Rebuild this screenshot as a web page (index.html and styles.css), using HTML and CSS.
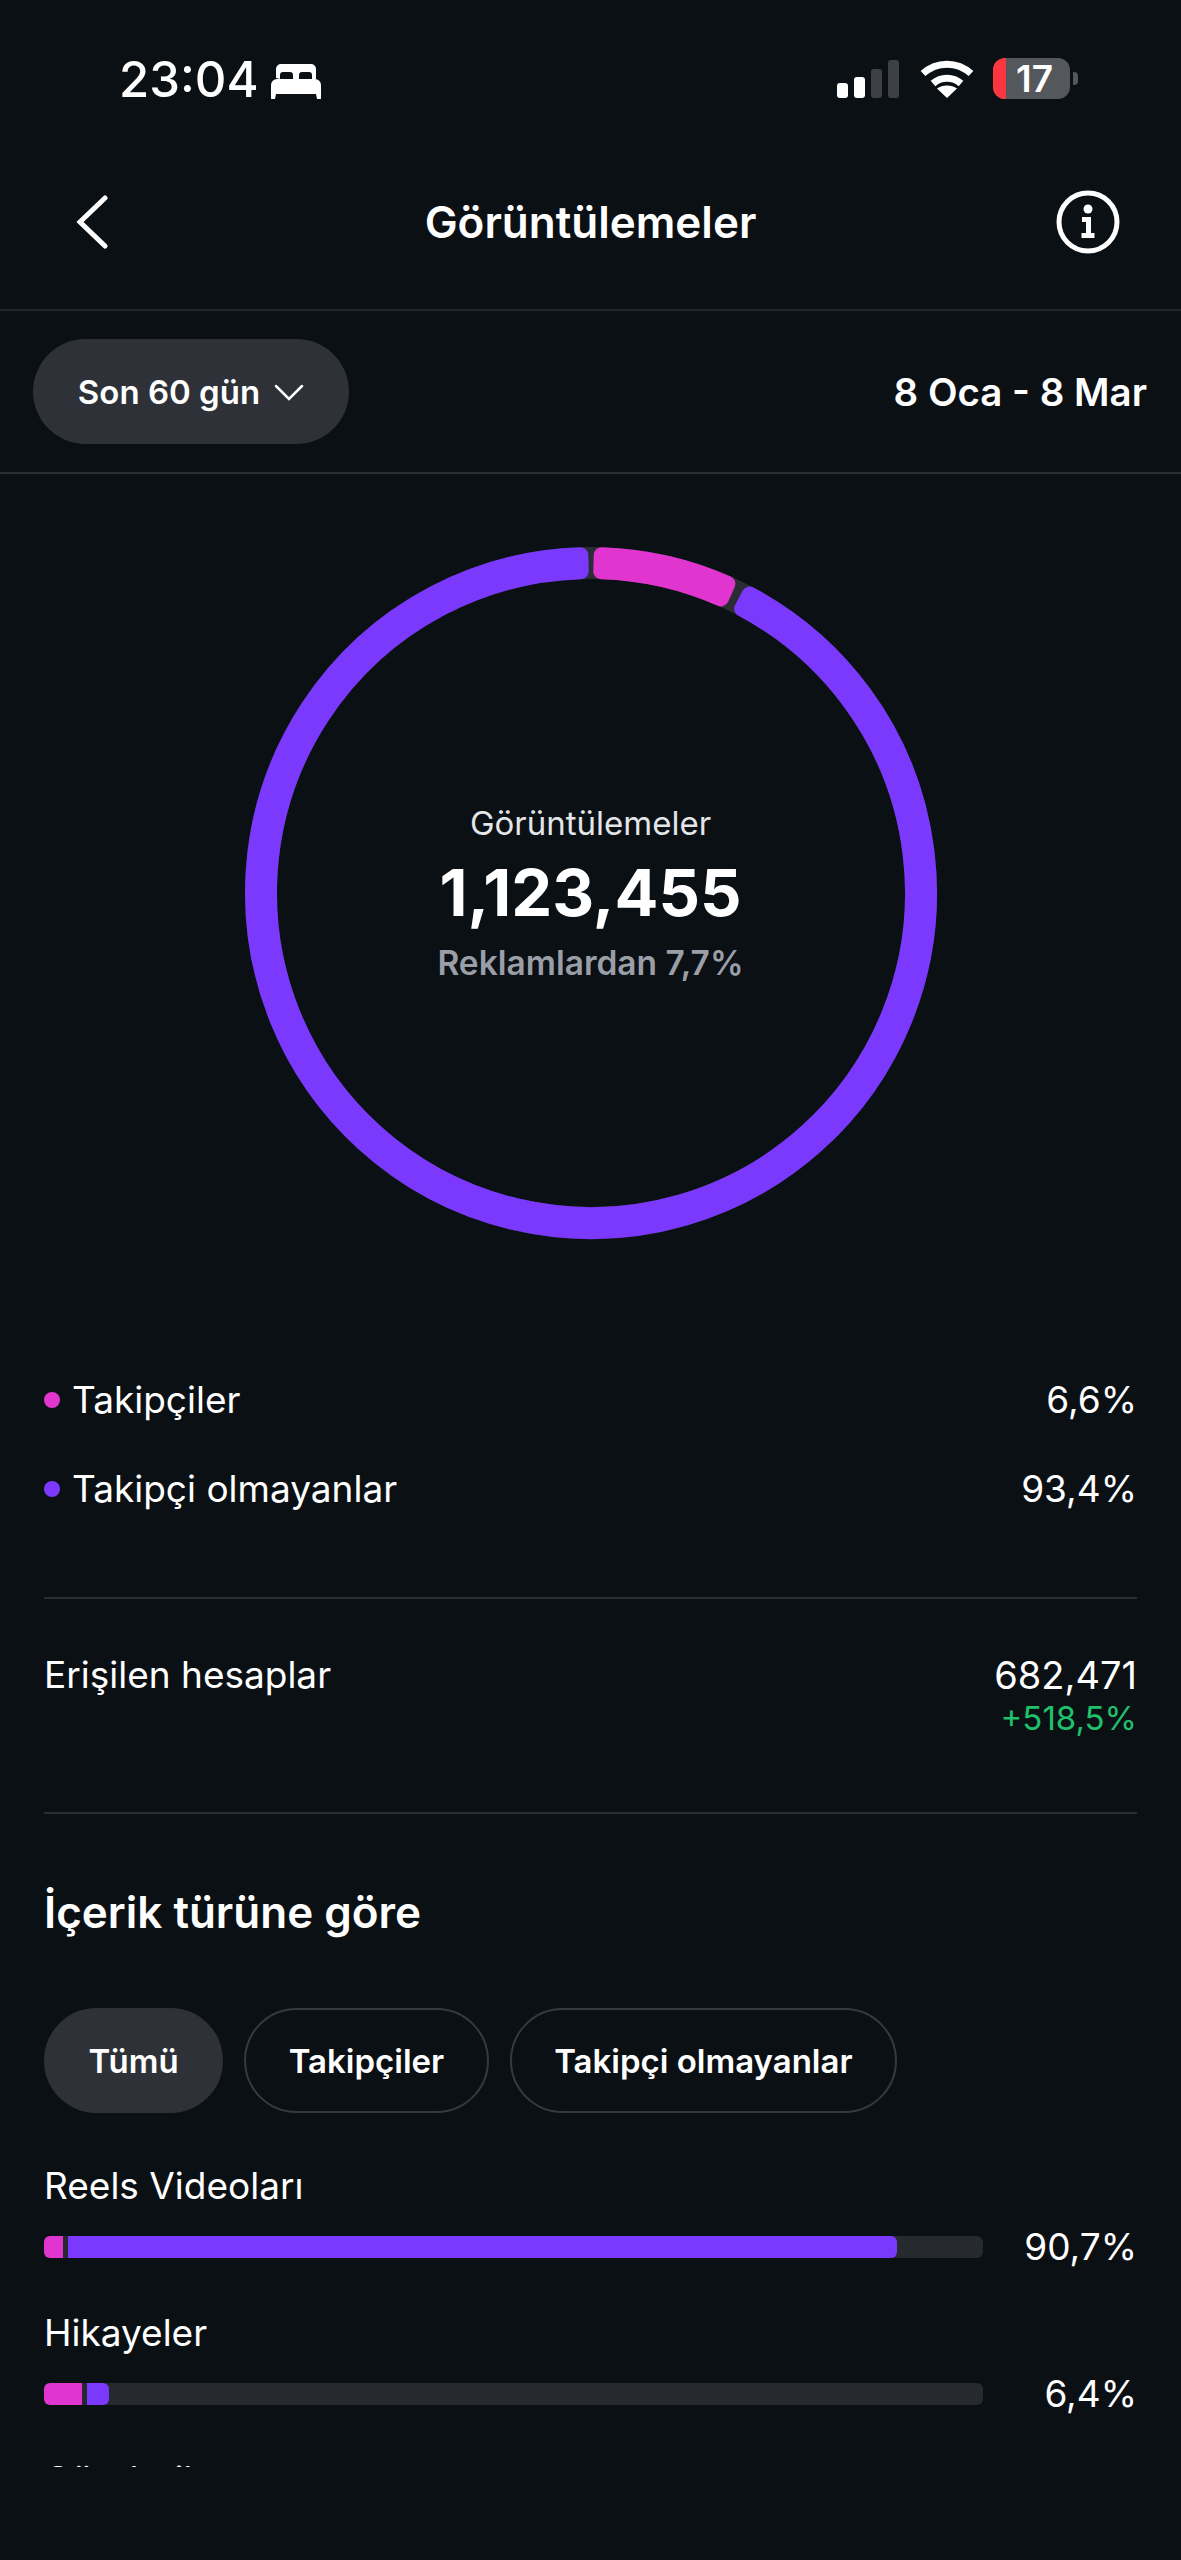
FILE: index.html
```html
<!DOCTYPE html>
<html lang="tr">

<head>
    <meta charset="utf-8">
    <meta name="viewport" content="width=device-width, initial-scale=1">
    <title>Görüntülemeler</title>
    <link rel="stylesheet" href="styles.css">
</head>

<body>
    <!-- Status bar -->
    <div class="status-bar">
        <div class="status-left">
            <span class="clock">23:04</span>
            <svg class="bed" width="50" height="36" viewBox="0 0 50 36">
                <path fill="#fff" d="M5 15V6a5 5 0 0 1 5-5h30a5 5 0 0 1 5 5v10h-4v-4a3 3 0 0 0-3-3h-7a3 3 0 0 0-3 3v4h-6v-4a3 3 0 0 0-3-3h-7a3 3 0 0 0-3 3v4zM0 22a6 6 0 0 1 6-6h38a6 6 0 0 1 6 6v14h-4l-1-5H5l-1 5H0z" />
            </svg>
        </div>
        <div class="status-right">
            <div class="signal">
                <span class="sig-bar sig-1"></span>
                <span class="sig-bar sig-2"></span>
                <span class="sig-bar sig-3 off"></span>
                <span class="sig-bar sig-4 off"></span>
            </div>
            <svg class="wifi" width="54" height="38" viewBox="0 0 54 38">
                <path fill="none" stroke="#fff" stroke-width="7" d="M3 13.5C17 1 37 1 51 13.5" />
                <path fill="none" stroke="#fff" stroke-width="7" d="M13 23.5C21 16.5 33 16.5 41 23.5" />
                <path fill="#fff" d="M27 38 17 28.5C22.5 24.500 31.500 24.500 37 28.500z" />
            </svg>
            <div class="battery">
                <div class="battery-body">
                    <span class="battery-level"></span>
                    <span class="battery-num">17</span>
                </div>
                <span class="battery-nub"></span>
            </div>
        </div>
    </div>

    <!-- Header -->
    <div class="nav-bar">
        <svg class="back" width="34" height="54" viewBox="0 0 34 54">
            <path fill="none" stroke="#fff" stroke-width="5" stroke-linecap="round" d="M30 3 5 27l25 24" />
        </svg>
        <h1 class="nav-title">Görüntülemeler</h1>
        <svg class="info" width="64" height="64" viewBox="0 0 64 64">
            <circle cx="32" cy="32" r="29" fill="none" stroke="#fff" stroke-width="5" />
            <circle cx="32" cy="19" r="4.500" fill="#fff" />
            <path fill="#fff" d="M26 27h9v16h3.500v5H25.500v-5H30V32h-4z" />
        </svg>
    </div>

    <!-- Period filter -->
    <div class="filter-bar">
        <button class="period-btn">Son 60 gün
            <svg width="30" height="18" viewBox="0 0 30 18">
                <path fill="none" stroke="#fff" stroke-width="2.500" stroke-linecap="round" d="M2 3l13 13L28 3" />
            </svg>
        </button>
        <div class="date-range">8 Oca - 8 Mar</div>
    </div>

    <div class="content">
        <!-- Donut chart -->
        <div class="donut">
            <svg width="700" height="700" viewBox="0 0 700 700">
                <circle cx="350" cy="350" r="330" fill="none" stroke="#2a2d33" stroke-width="32" />
                <path fill="#e035cf" stroke="#e035cf" stroke-width="16" stroke-linejoin="round"
                    d="M360.73 12.17A338 338 0 0 1 486.4 40.74L479.94 55.38A322 322 0 0 0 360.23 28.16z" />
                <path fill="#7a39fd" stroke="#7a39fd" stroke-width="16" stroke-linejoin="round"
                    d="M508.68 51.56A338 338 0 1 1 339.27 12.17L339.77 28.16A322 322 0 1 0 501.17 65.69z" />
            </svg>
            <div class="donut-center">
                <div class="donut-label">Görüntülemeler</div>
                <div class="donut-total">1,123,455</div>
                <div class="donut-ads">Reklamlardan 7,7%</div>
            </div>
        </div>

        <!-- Legend -->
        <div class="section legend">
            <div class="legend-row">
                <span class="legend-name"><i class="dot dot-pink"></i>Takipçiler</span>
                <span>6,6%</span>
            </div>
            <div class="legend-row">
                <span class="legend-name"><i class="dot dot-purple"></i>Takipçi olmayanlar</span>
                <span>93,4%</span>
            </div>
        </div>

        <!-- Reached accounts -->
        <div class="section reach">
            <span>Erişilen hesaplar</span>
            <div class="reach-values">
                <div class="reach-total">682,471</div>
                <div class="reach-delta">+518,5%</div>
            </div>
        </div>

        <!-- By content type -->
        <div class="by-type">
            <h2 class="by-type-title">İçerik türüne göre</h2>
            <div class="chips">
                <button class="chip active">Tümü</button>
                <button class="chip">Takipçiler</button>
                <button class="chip">Takipçi olmayanlar</button>
            </div>

            <div class="type-row">
                <div class="type-name">Reels Videoları</div>
                <div class="type-line">
                    <div class="track">
                        <span class="seg seg-pink" style="width: 19px"></span>
                        <span class="seg seg-purple" style="width: 829px"></span>
                    </div>
                    <span class="type-pct">90,7%</span>
                </div>
            </div>

            <div class="type-row">
                <div class="type-name">Hikayeler</div>
                <div class="type-line">
                    <div class="track">
                        <span class="seg seg-pink" style="width: 38px"></span>
                        <span class="seg seg-purple" style="width: 22px"></span>
                    </div>
                    <span class="type-pct">6,4%</span>
                </div>
            </div>

            <div class="type-row">
                <div class="type-name">Gönderiler</div>
            </div>
        </div>
    </div>
</body>

</html>
```

FILE: styles.css
```css
body {
    background-color: #0b1014;
    color: #fff;
    font-family: Inter, "Noto Sans", sans-serif;
    margin: 0;
    padding: 0;
    width: 1181px;
    height: 2560px;
    overflow: hidden;
}

/* Status bar */
.status-bar {
    height: 131px;
    box-sizing: border-box;
    padding: 58px 103px 0 119px;
    display: flex;
    justify-content: space-between;
    align-items: flex-start;
}

.status-left {
    display: flex;
    align-items: flex-start;
    gap: 12px;
}

.clock {
    font-size: 49px;
    font-weight: 500;
    line-height: 44px;
}

.bed {
    margin-top: 5px;
}

.status-right {
    display: flex;
    align-items: flex-start;
    gap: 19px;
}

.signal {
    display: flex;
    align-items: flex-end;
    gap: 6px;
    height: 38px;
    margin: 2px 2px 0 0;
}

.sig-bar {
    width: 11px;
    background-color: #fff;
    border-radius: 3px;
}

.sig-bar.off {
    background-color: #3d4145;
}

.sig-1 { height: 15px; }
.sig-2 { height: 21px; }
.sig-3 { height: 29px; }
.sig-4 { height: 38px; }

.wifi {
    margin-top: 2px;
}

.battery {
    display: flex;
    align-items: center;
    gap: 3px;
}

.battery-body {
    position: relative;
    width: 77px;
    height: 41px;
    border-radius: 12px;
    background-color: #54575b;
    display: flex;
    align-items: center;
    justify-content: center;
}

.battery-level {
    position: absolute;
    left: 0;
    top: 0;
    bottom: 0;
    width: 13px;
    border-radius: 12px 0 0 12px;
    background-color: #fb3640;
}

.battery-num {
    position: relative;
    font-size: 37px;
    font-weight: 600;
    line-height: 37px;
    margin-left: 6px;
}

.battery-nub {
    width: 5px;
    height: 13px;
    border-radius: 0 4px 4px 0;
    background-color: #54575b;
}

/* Header */
.nav-bar {
    height: 180px;
    box-sizing: border-box;
    padding: 3px 61px 0;
    display: grid;
    grid-template-columns: 1fr auto 1fr;
    align-items: center;
    border-bottom: 2px solid #23262b;
}

.back {
    margin-left: 14px;
}

.info {
    justify-self: end;
}

.nav-title {
    margin: 0;
    font-size: 44px;
    font-weight: 600;
}

/* Period filter */
.filter-bar {
    height: 163px;
    box-sizing: border-box;
    padding: 0 34px 0 33px;
    display: flex;
    align-items: center;
    justify-content: space-between;
    border-bottom: 2px solid #2a2d33;
}

.period-btn {
    width: 316px;
    height: 105px;
    border: none;
    border-radius: 53px;
    background-color: #2e3238;
    color: #fff;
    font-family: inherit;
    font-size: 33px;
    font-weight: 600;
    display: flex;
    align-items: center;
    justify-content: center;
    gap: 14px;
}

.date-range {
    font-size: 38.5px;
    font-weight: 600;
}

.content {
    height: 1993px;
    overflow: hidden;
}

/* Donut chart */
.donut {
    position: relative;
    width: 700px;
    height: 700px;
    margin: 69px auto 0;
}

.donut svg {
    display: block;
}

.donut-center {
    position: absolute;
    inset: 0;
    display: flex;
    flex-direction: column;
    align-items: center;
    justify-content: center;
}

.donut-label {
    font-size: 33px;
    color: #e3e5e8;
    line-height: 44px;
}

.donut-total {
    font-size: 65px;
    font-weight: 700;
    line-height: 78px;
    margin: 9px 0;
}

.donut-ads {
    font-size: 33.5px;
    font-weight: 600;
    color: #9a9ea6;
    line-height: 44px;
}

/* Sections */
.section {
    margin: 0 44px;
    font-size: 37px;
}

.legend {
    margin-top: 112px;
    padding-bottom: 64px;
    border-bottom: 2px solid #2a2d33;
}

.legend-row {
    display: flex;
    justify-content: space-between;
    height: 89px;
    align-items: center;
}

.legend-name {
    display: flex;
    align-items: center;
}

.dot {
    width: 16px;
    height: 16px;
    border-radius: 50%;
    margin-right: 12px;
}

.dot-pink { background-color: #e035cf; }
.dot-purple { background-color: #7a39fd; }

.reach {
    display: flex;
    justify-content: space-between;
    padding: 54px 0 76px;
    border-bottom: 2px solid #2a2d33;
    line-height: 44px;
}

.reach-values {
    text-align: right;
}

.reach-total {
    font-size: 38px;
}

.reach-delta {
    color: #1fc16b;
    font-size: 33px;
    line-height: 36px;
    margin-top: 3px;
}

/* By content type */
.by-type {
    margin: 0 44px;
}

.by-type-title {
    margin: 72px 0 0;
    font-size: 44px;
    font-weight: 600;
    line-height: 52px;
}

.chips {
    display: flex;
    gap: 21px;
    margin-top: 70px;
    margin-bottom: 50px;
}

.chip {
    height: 105px;
    box-sizing: border-box;
    padding: 0 42.5px;
    border: 2px solid #363a40;
    border-radius: 53px;
    background: none;
    color: #fff;
    font-family: inherit;
    font-size: 33px;
    font-weight: 600;
}

.chip.active {
    background-color: #2e3238;
    border-color: #2e3238;
}

.type-row {
    margin-bottom: 40px;
}

.type-name {
    font-size: 37px;
    line-height: 46px;
}

.type-line {
    display: flex;
    align-items: center;
    justify-content: space-between;
    margin-top: 15px;
}

.track {
    width: 939px;
    height: 22px;
    border-radius: 6px;
    background-color: #26292e;
    display: flex;
    gap: 5px;
    overflow: hidden;
}

.seg {
    height: 100%;
}

.seg-pink { background-color: #e035cf; }

.seg-purple {
    background-color: #7a39fd;
    border-radius: 0 6px 6px 0;
}

.type-pct {
    font-size: 37px;
    line-height: 46px;
}
```
